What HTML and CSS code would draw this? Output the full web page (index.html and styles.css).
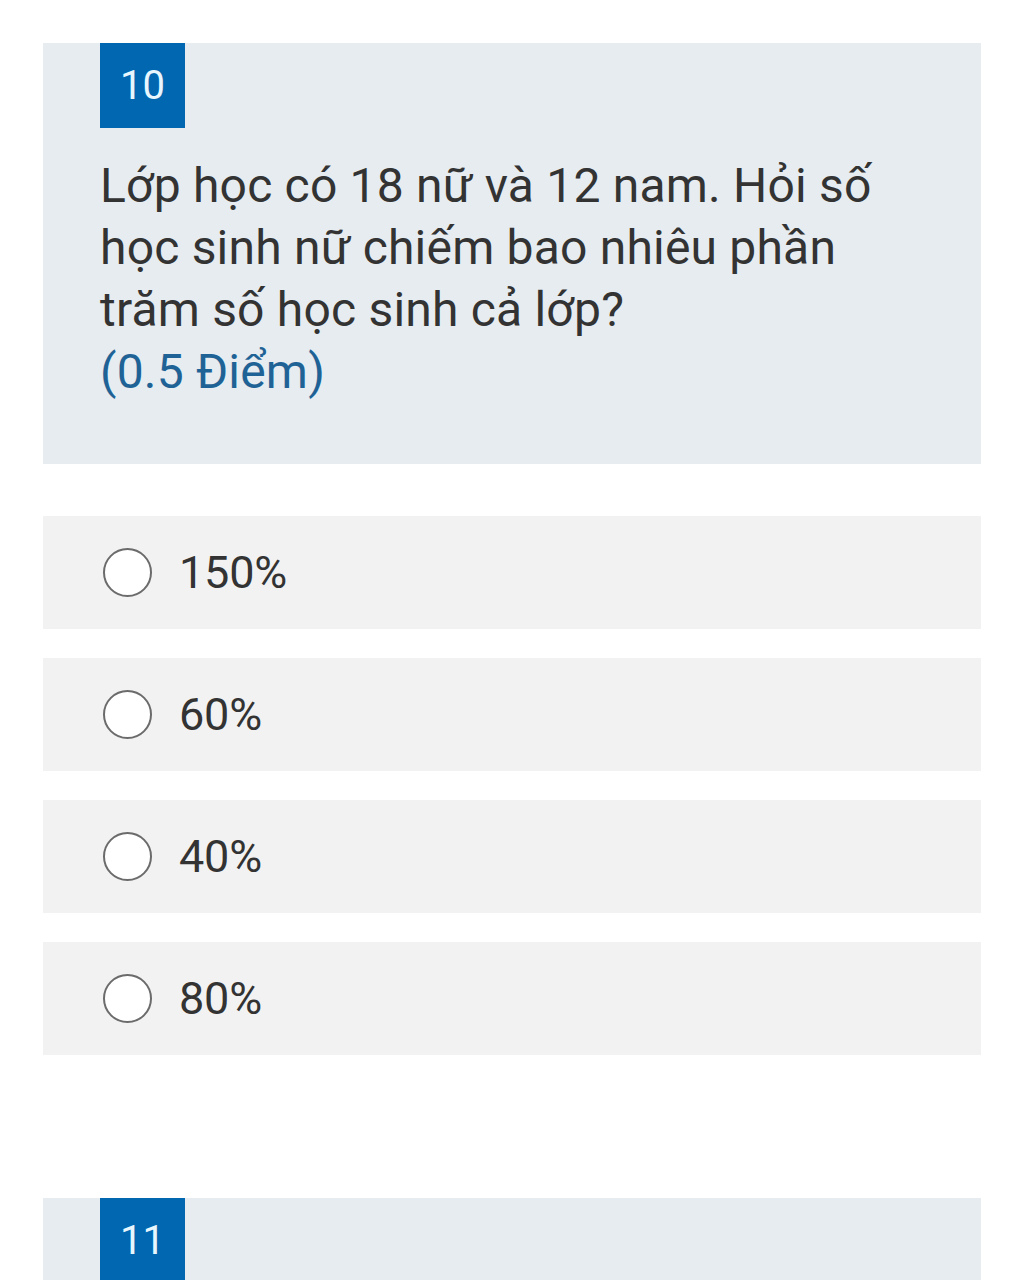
FILE: index.html
```html
<!DOCTYPE html>
<html lang="vi">
<head>
<meta charset="utf-8">
<link rel="stylesheet" href="styles.css">
</head>
<body>
<div class="page">
  <section class="question">
    <div class="qhead">
      <div class="badge">10</div>
    </div>
    <div class="qtext">Lớp học có 18 nữ và 12 nam. Hỏi số học sinh nữ chiếm bao nhiêu phần trăm số học sinh cả lớp?<br><span class="points">(0.5 Điểm)</span></div>
  </section>
  <div class="options">
    <label class="option"><span class="radio"></span><span class="otext">150%</span></label>
    <label class="option"><span class="radio"></span><span class="otext">60%</span></label>
    <label class="option"><span class="radio"></span><span class="otext">40%</span></label>
    <label class="option"><span class="radio"></span><span class="otext">80%</span></label>
  </div>
  <section class="question next">
    <div class="qhead">
      <div class="badge">11</div>
    </div>
  </section>
</div>
</body>
</html>
```

FILE: styles.css
```css
* { box-sizing: border-box; }
html, body { margin: 0; padding: 0; background: #ffffff; overflow: hidden; }
body { font-family: Roboto, "Noto Sans", Arial, sans-serif; color: #333333; }
.page { padding: 43px 43px 0 43px; width: 1024px; height: 1280px; overflow: hidden; }
.question { background: #e6ecf0; padding: 0 80px 61px 57px; }
.badge {
  width: 85px; height: 85px; background: #0067b0; color: #e8f6ff;
  font-size: 40px; display: flex; align-items: center; justify-content: center;
}
.qtext { margin-top: 27px; font-size: 48px; line-height: 62px; letter-spacing: 0.2px; color: #333333; }
.points { color: #1f6396; letter-spacing: 0.2px; }
.options { display: flex; flex-direction: column; gap: 29px; margin-top: 52px; }
.option {
  background: #f2f2f2; height: 113px; display: flex; align-items: center;
  padding-left: 60px;
}
.radio {
  width: 49px; height: 49px; border-radius: 50%; border: 2.5px solid #6b6b6b;
  background: #ffffff; flex: none;
}
.otext { margin-left: 27px; font-size: 45px; letter-spacing: -0.2px; color: #333333; }
.next { margin-top: 143px; height: 200px; }
```
